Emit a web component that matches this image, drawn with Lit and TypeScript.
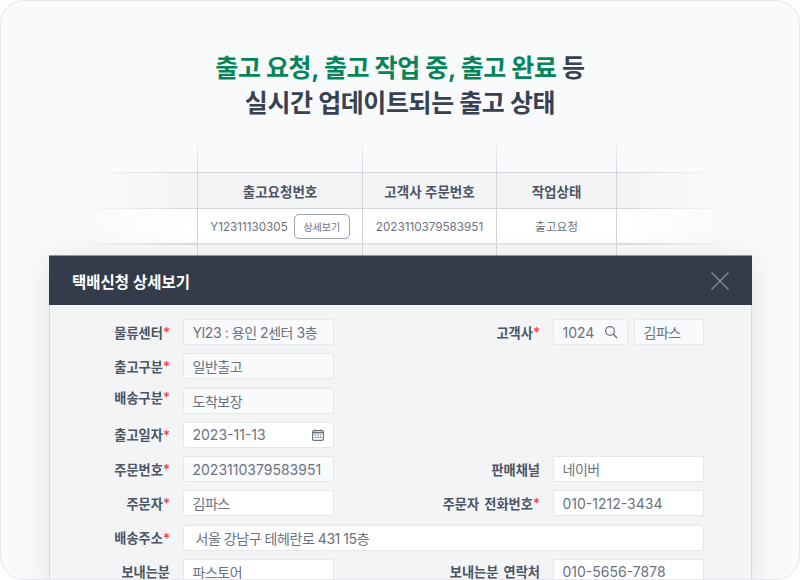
import { LitElement, html, css, nothing } from "lit";
import { customElement } from "lit/decorators.js";
import { classMap } from "lit/directives/class-map.js";

type Field = { value: string; filled?: boolean; tight?: boolean; icon?: "calendar" | "search"; wide?: boolean };
type Row = { label: string; required?: boolean; raised?: boolean; field: Field };

const searchIcon = html`<svg class="icon" width="14" height="14" viewBox="0 0 14 14" fill="none" stroke="#6b7280" stroke-width="1.3">
  <circle cx="6" cy="6" r="4.4"></circle><path d="M9.3 9.3 12.8 12.8" stroke-linecap="round"></path>
</svg>`;

const calendarIcon = html`<svg class="icon" width="12" height="12" viewBox="0 0 12 12" fill="none">
  <rect x="0.6" y="1.6" width="10.8" height="9.8" rx="1.4" stroke="#6b7280" stroke-width="1.2"></rect>
  <path d="M0.6 3h10.8v1.4H0.6z" fill="#6b7280"></path>
  <path d="M3 0.4v2M9 0.4v2" stroke="#6b7280" stroke-width="1.2"></path>
  <path d="M2.6 6h1.6M5.2 6h1.6M7.8 6h1.6M2.6 8.4h1.6M5.2 8.4h1.6M7.8 8.4h1.6" stroke="#6b7280" stroke-width="1.1"></path>
</svg>`;

@customElement("app-root")
export class AppRoot extends LitElement {
  static styles = css`
    :host {
      display: block;
      width: 800px;
      height: 580px;
      background: #fff;
      font-family: Inter, "Noto Sans CJK KR", sans-serif;
    }
    .card {
      position: relative;
      box-sizing: border-box;
      height: 580px;
      overflow: hidden;
      border: 1px solid #e5e7eb;
      border-radius: 24px;
      background: #f9fafb;
    }
    h1 {
      margin: 0;
      padding-top: 50px;
      text-align: center;
      font-size: 25px;
      line-height: 34.5px;
      font-weight: 700;
      letter-spacing: -0.4px;
      color: #374151;
    }
    h1 em {
      font-style: normal;
      color: #06855a;
    }

    /* list behind the dialog */
    .table {
      display: grid;
      grid-template-columns: 117px 165px 134px 120px 114px;
      grid-template-rows: 37px 36px 35px 40px;
      margin: 15px 0 0 79px;
      width: 650px;
      font-size: 11.7px;
      color: #6b7280;
    }
    .cell {
      box-sizing: border-box;
      display: flex;
      align-items: center;
      justify-content: center;
      gap: 6px;
      border-left: 1px solid #d1d5db;
      border-top: 1px solid #d1d5db;
    }
    .cell.top {
      border-top: 0;
      border-left: 0;
      background: linear-gradient(to bottom, #f9fafb00, #d1d5db) left / 1px 100% no-repeat;
    }
    .cell.head {
      background: #f3f4f6;
      font-size: 13.5px;
      font-weight: 600;
      color: #4b5563;
    }
    .cell.body {
      background: #fff;
    }
    .cell.last {
      background: none;
      border-top: 2px solid #e5e7eb;
    }
    .num {
      margin-top: 2px;
    }
    .status {
      margin-bottom: 2px;
    }
    .side {
      box-sizing: border-box;
      border-top: 1px solid #d1d5db;
    }
    .side.head {
      background: #f3f4f6;
    }
    .side.body {
      background: #fff;
    }
    .side.last {
      border-top: 2px solid #d9dce1;
    }
    .side.left {
      -webkit-mask-image: linear-gradient(to right, transparent, #000);
      mask-image: linear-gradient(to right, transparent, #000);
    }
    .side.right {
      border-left: 1px solid #d1d5db;
      -webkit-mask-image: linear-gradient(to left, transparent, #000);
      mask-image: linear-gradient(to left, transparent, #000);
    }
    .detail-btn {
      box-sizing: border-box;
      width: 56px;
      height: 25px;
      padding: 0;
      border: 1px solid #9ca3af;
      border-radius: 5px;
      background: #fff;
      font: inherit;
      font-size: 10px;
      color: #6b7280;
    }

    /* dialog */
    .modal {
      position: absolute;
      left: 48px;
      top: 254px;
      width: 703px;
      height: 330px;
      box-sizing: border-box;
      border-top: 1px solid #8f96a3;
      background: #f3f4f6;
      box-shadow: 0 4px 30px rgba(17, 24, 39, 0.1);
    }
    .modal-head {
      display: flex;
      align-items: center;
      justify-content: space-between;
      height: 49px;
      padding: 0 23px;
      background: #343c4b;
      color: #fff;
      font-size: 15.5px;
      font-weight: 600;
    }
    .close {
      display: block;
    }
    .form {
      display: grid;
      grid-template-columns: 120px 151px 193px 151px;
      grid-auto-rows: 26px;
      column-gap: 13px;
      row-gap: 8.25px;
      box-sizing: border-box;
      height: 281px;
      padding-top: 14px;
      border-left: 1px solid #d8dbe0;
      border-right: 1px solid #d8dbe0;
    }
    .label {
      display: flex;
      align-items: center;
      justify-content: flex-end;
      font-size: 13.2px;
      word-spacing: 2px;
      font-weight: 600;
      color: #4b5563;
      white-space: nowrap;
    }
    .label.raised {
      padding-bottom: 7px;
    }
    .label i {
      font-style: normal;
      color: #ef4444;
    }
    .field {
      box-sizing: border-box;
      display: flex;
      align-items: center;
      justify-content: space-between;
      padding: 0 9px 0 8.5px;
      border: 1px solid #e5e7eb;
      border-radius: 2px;
      background: #fff;
      font-size: 14px;
      color: #6b7280;
      white-space: nowrap;
    }
    .field.filled {
      background: #f9fafb;
    }
    .field.tight {
      letter-spacing: -0.45px;
    }
    .field.wide {
      grid-column: 2 / 5;
      padding-left: 11.5px;
    }
    .pair {
      display: flex;
      gap: 6px;
    }
    .pair .field:first-child {
      width: 75px;
    }
    .pair .field:last-child {
      width: 70px;
    }
    .icon {
      flex: none;
    }
    .spacer {
      grid-column: 3 / 5;
    }
  `;

  private renderField(f: Field) {
    const icon = f.icon === "calendar" ? calendarIcon : f.icon === "search" ? searchIcon : nothing;
    return html`<div class=${classMap({ field: true, filled: !!f.filled, tight: !!f.tight, wide: !!f.wide })}>
      <span>${f.value}</span>${icon}
    </div>`;
  }

  private renderLabel(r: Row) {
    return html`<div class=${classMap({ label: true, raised: !!r.raised })}>
      ${r.label}${r.required ? html`<i>*</i>` : nothing}
    </div>`;
  }

  private renderRow(left: Row, right?: Row) {
    return html`
      ${this.renderLabel(left)}${this.renderField(left.field)}
      ${left.field.wide
        ? nothing
        : right
          ? html`${this.renderLabel(right)}${this.renderField(right.field)}`
          : html`<div class="spacer"></div>`}
    `;
  }

  render() {
    return html`
      <div class="card">
        <h1><em>출고 요청, 출고 작업 중, 출고 완료</em> 등<br />실시간 업데이트되는 출고 상태</h1>

        <div class="table">
          <div></div>
          <div class="cell top"></div>
          <div class="cell top"></div>
          <div class="cell top"></div>
          <div class="cell top"></div>

          <div class="side left head"></div>
          <div class="cell head">출고요청번호</div>
          <div class="cell head">고객사 주문번호</div>
          <div class="cell head">작업상태</div>
          <div class="side right head"></div>

          <div class="side left body"></div>
          <div class="cell body">
            <span class="num">Y12311130305</span>
            <button class="detail-btn">상세보기</button>
          </div>
          <div class="cell body"><span class="num">2023110379583951</span></div>
          <div class="cell body"><span class="status">출고요청</span></div>
          <div class="side right body"></div>

          <div class="side left last"></div>
          <div class="cell last"></div>
          <div class="cell last"></div>
          <div class="cell last"></div>
          <div class="side right last"></div>
        </div>

        <div class="modal">
          <div class="modal-head">
            <span>택배신청 상세보기</span>
            <svg class="close" width="18" height="18" viewBox="0 0 18 18" stroke="#8b93a0" stroke-width="1.1">
              <path d="M0.5 0.5 17.5 17.5M17.5 0.5 0.5 17.5"></path>
            </svg>
          </div>
          <div class="form">
            ${this.renderLabel({ label: "물류센터", required: true, field: { value: "" } })}
            ${this.renderField({ value: "YI23 : 용인 2센터 3층", filled: true, tight: true })}
            ${this.renderLabel({ label: "고객사", required: true, field: { value: "" } })}
            <div class="pair">
              ${this.renderField({ value: "1024", filled: true, icon: "search" })}
              ${this.renderField({ value: "김파스", filled: true, tight: true })}
            </div>
            ${this.renderRow({ label: "출고구분", required: true, field: { value: "일반출고", filled: true, tight: true } })}
            ${this.renderRow({ label: "배송구분", required: true, raised: true, field: { value: "도착보장", filled: true, tight: true } })}
            ${this.renderRow({ label: "출고일자", required: true, field: { value: "2023-11-13", icon: "calendar" } })}
            ${this.renderRow(
              { label: "주문번호", required: true, field: { value: "2023110379583951", filled: true } },
              { label: "판매채널", field: { value: "네이버", tight: true } }
            )}
            ${this.renderRow(
              { label: "주문자", required: true, field: { value: "김파스", tight: true } },
              { label: "주문자 전화번호", required: true, field: { value: "010-1212-3434" } }
            )}
            ${this.renderRow({ label: "배송주소", required: true, field: { value: "서울 강남구 테헤란로 431 15층", wide: true, tight: true } })}
            ${this.renderRow(
              { label: "보내는분", field: { value: "파스토어", tight: true } },
              { label: "보내는분 연락처", field: { value: "010-5656-7878" } }
            )}
          </div>
        </div>
      </div>
    `;
  }
}
